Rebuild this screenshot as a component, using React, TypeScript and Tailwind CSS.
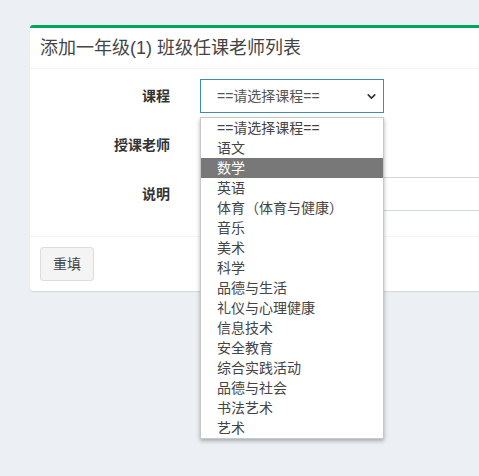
import { ChevronDown } from "lucide-react";

const courses = [
  "==请选择课程==",
  "语文",
  "数学",
  "英语",
  "体育（体育与健康）",
  "音乐",
  "美术",
  "科学",
  "品德与生活",
  "礼仪与心理健康",
  "信息技术",
  "安全教育",
  "综合实践活动",
  "品德与社会",
  "书法艺术",
  "艺术",
];

const font = { fontFamily: '"Liberation Sans", "Noto Sans CJK SC", sans-serif' };

function Label({ children }: { children: React.ReactNode }) {
  return (
    <label className="w-[130px] shrink-0 text-right text-[14px] leading-[34px] font-bold text-[#333]">
      {children}
    </label>
  );
}

export default function App() {
  const selected = "数学";

  return (
    <div
      lang="zh-CN"
      className="min-h-[476px] overflow-hidden bg-[#ecf0f5] pt-[25px] pl-[30px] [text-spacing-trim:space-all]"
      style={font}
    >
      <div className="mr-[-40px] rounded-l-[3px] border-t-[3px] border-[#00a65a] bg-white shadow-[0_1px_1px_rgba(0,0,0,0.1)]">
        <div className="border-b border-[#f4f4f4] p-[10px]">
          <h3 className="text-[18px] leading-[20px] text-[#444]">添加一年级(1) 班级任课老师列表</h3>
        </div>

        <div className="flex flex-col gap-[15px] px-[10px] pt-[10px] pb-[25px]">
          <div className="flex gap-[30px]">
            <Label>课程</Label>
            <div className="relative">
              <div className="flex h-[34px] w-[184px] items-center justify-between border border-[#3c8dbc] pr-[5px] pl-[16px] text-[14px] text-[#555]">
                <span>==请选择课程==</span>
                <ChevronDown size={13} strokeWidth={3} className="text-[#333]" />
              </div>
              <ul className="absolute top-[38px] left-0 z-10 w-[184px] border border-[#c8c8c8] bg-white shadow-[0_2px_4px_rgba(0,0,0,0.3)]">
                {courses.map((c) => (
                  <li
                    key={c}
                    className={
                      c === selected
                        ? "h-[20px] bg-[#787878] pl-[16px] text-[14px] leading-[20px] text-white"
                        : "h-[20px] pl-[16px] text-[14px] leading-[20px] text-[#444]"
                    }
                  >
                    {c}
                  </li>
                ))}
              </ul>
            </div>
          </div>

          <div className="flex gap-[30px]">
            <Label>授课老师</Label>
            <div className="h-[34px] w-[184px] border border-[#d2d6de]" />
          </div>

          <div className="flex gap-[30px]">
            <Label>说明</Label>
            <input className="h-[34px] flex-1 border border-[#d2d6de] px-[12px] text-[14px] outline-none" />
          </div>
        </div>

        <div className="border-t border-[#f4f4f4] p-[10px]">
          <button className="h-[34px] rounded-[3px] border border-[#ddd] bg-[#f4f4f4] px-[12px] text-[14px] text-[#444]">
            重填
          </button>
        </div>
      </div>
    </div>
  );
}
